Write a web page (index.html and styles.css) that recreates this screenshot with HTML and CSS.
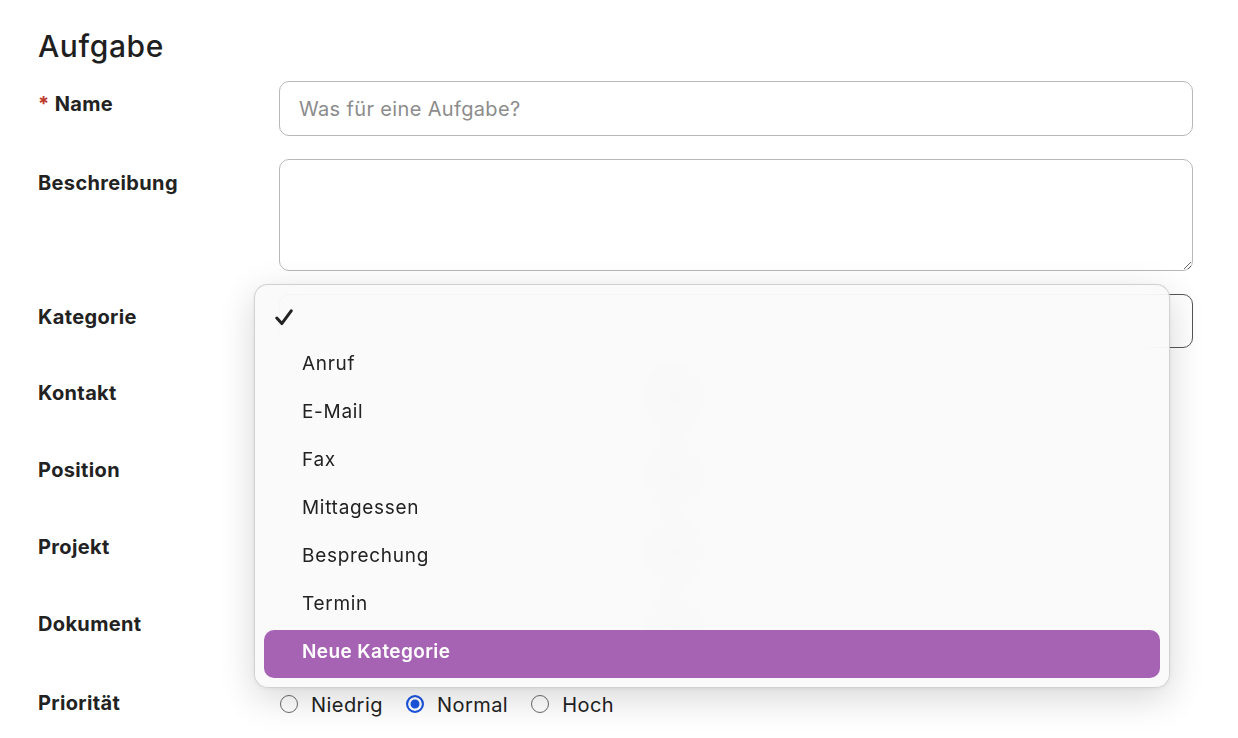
FILE: index.html
```html
<!DOCTYPE html>
<html lang="de">
<head>
<meta charset="utf-8">
<title>Aufgabe</title>
<link rel="stylesheet" href="styles.css">
</head>
<body>
<div class="page">
  <h1 class="title">Aufgabe</h1>
  <form class="form">
    <label class="label"><span class="req">*</span> Name</label>
    <input class="field" type="text" placeholder="Was für eine Aufgabe?">

    <label class="label label-area">Beschreibung</label>
    <textarea class="field area"></textarea>

    <label class="label">Kategorie</label>
    <div class="field select"></div>

    <label class="label label-picker">Kontakt</label>
    <div class="picker"><div class="picker-box"></div><span class="picker-btn"></span></div>

    <label class="label label-picker">Position</label>
    <div class="picker"><div class="picker-box"></div><span class="picker-btn"></span></div>

    <label class="label label-picker">Projekt</label>
    <div class="picker"><div class="picker-box"></div><span class="picker-btn"></span></div>

    <label class="label label-picker">Dokument</label>
    <div class="picker"><div class="picker-box"></div><span class="picker-btn"></span></div>

    <label class="label label-area">Priorität</label>
    <div class="radios">
      <label class="radio"><input type="radio" name="prio"> Niedrig</label>
      <label class="radio"><input type="radio" name="prio" checked> Normal</label>
      <label class="radio"><input type="radio" name="prio"> Hoch</label>
    </div>
  </form>

  <!-- open category menu -->
  <ul class="menu">
    <li class="menu-item">
      <svg class="check" width="18" height="17" viewBox="0 0 18 17"><path d="M1.8 9 L6.8 14.6 L16.2 1.8" fill="none" stroke="#222" stroke-width="3" stroke-linecap="round" stroke-linejoin="round"/></svg>
    </li>
    <li class="menu-item">Anruf</li>
    <li class="menu-item">E-Mail</li>
    <li class="menu-item">Fax</li>
    <li class="menu-item">Mittagessen</li>
    <li class="menu-item">Besprechung</li>
    <li class="menu-item">Termin</li>
    <li class="menu-item active">Neue Kategorie</li>
  </ul>
</div>
</body>
</html>
```

FILE: styles.css
```css
* {
  box-sizing: border-box;
}

body {
  margin: 0;
  background: #ffffff;
  color: #222222;
  font-family: Inter, "Noto Sans", sans-serif;
}

.page {
  position: relative;
  padding: 28px 45px 0 38px;
  min-height: 738px;
}

.title {
  margin: 0 0 17px;
  font-size: 30px;
  line-height: 36px;
  font-weight: 500;
  letter-spacing: 0.6px;
  color: #1f1f1f;
}

.form {
  display: grid;
  grid-template-columns: 241px 1fr;
  row-gap: 23px;
}

.label {
  padding-top: 11px;
  font-size: 20px;
  line-height: 24px;
  font-weight: 700;
  letter-spacing: 0.35px;
  color: #222222;
}

.label-area {
  padding-top: 12px;
}

.label-picker {
  padding-top: 10px;
}

.req {
  color: #c0392b;
  font-weight: 700;
}

.field {
  display: block;
  width: 100%;
  height: 55px;
  margin: 0;
  padding: 0 19px;
  border: 1px solid #b8b8b8;
  border-radius: 10px;
  background: #ffffff;
  font-family: Inter, "Noto Sans", sans-serif;
  font-size: 20px;
  letter-spacing: 0.35px;
  color: #222222;
  outline: none;
}

.field::placeholder {
  color: #8c8c8c;
}

.area {
  height: 112px;
  padding: 14px 19px;
  resize: vertical;
}

.select {
  height: 54px;
  border-color: #555555;
}

.picker {
  display: flex;
  align-items: center;
  gap: 12px;
  height: 54px;
}

.picker-box {
  width: 370px;
  height: 54px;
  border: 1px solid #c4c4c4;
  border-radius: 10px;
}

.picker-btn {
  width: 30px;
  height: 30px;
  border-radius: 50%;
  background: #a9a9a9;
}

.radios {
  display: flex;
  align-items: center;
  gap: 23px;
  height: 48px;
  padding: 4px 0 0 1px;
}

.radio {
  display: flex;
  align-items: center;
  gap: 13px;
  font-size: 20px;
  letter-spacing: 0.45px;
  color: #222222;
}

.radio input {
  appearance: none;
  width: 18px;
  height: 18px;
  margin: 0 0 3px;
  border: 1.5px solid #6b6b6b;
  border-radius: 50%;
  background: #ffffff;
}

.radio input:checked {
  border: 2px solid #1d55e3;
  background: #1d55e3;
  box-shadow: inset 0 0 0 2.5px #ffffff;
}

/* dropdown menu floating over the form */
.menu {
  position: absolute;
  left: 254px;
  top: 284px;
  width: 916px;
  margin: 0;
  padding: 9px;
  list-style: none;
  border: 1px solid rgba(0, 0, 0, 0.16);
  border-radius: 14px;
  background: rgba(249, 249, 249, 0.9);
  backdrop-filter: blur(22px);
  box-shadow: 0 10px 36px rgba(0, 0, 0, 0.16), 0 1px 4px rgba(0, 0, 0, 0.06);
}

.menu-item {
  position: relative;
  height: 48px;
  padding-left: 38px;
  border-radius: 10px;
  font-size: 19px;
  line-height: 44px;
  letter-spacing: 0.7px;
  color: #222222;
}

.check {
  position: absolute;
  left: 11px;
  top: 15px;
}

.menu-item.active {
  background: #a763b3;
  color: #ffffff;
  font-weight: 600;
  letter-spacing: 0.4px;
}
```
